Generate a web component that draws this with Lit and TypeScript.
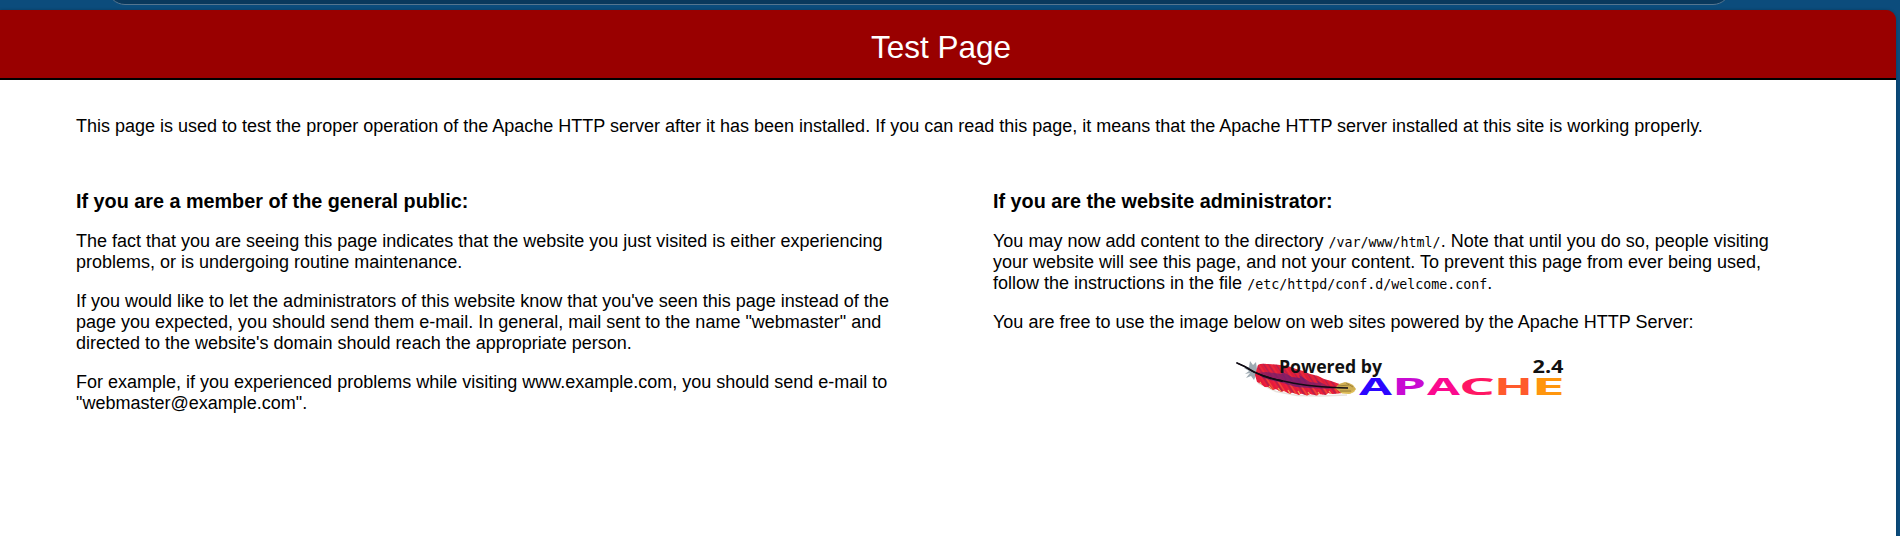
import { LitElement, html, css, svg } from "lit";
import { customElement } from "lit/decorators.js";

@customElement("apache-logo")
export class ApacheLogo extends LitElement {
  static styles = css`
    :host { display: block; }
    .logo { display: block; width: 336px; height: 54px; overflow: visible; }
    .small { font: bold 18px "Open Sans", sans-serif; fill: #111; }
    .big { font: bold 23px "Open Sans", sans-serif; }
  `;

  render() {
    // letter, left edge, horizontal stretch, colour
    const letters: [string, number, number, string][] = [
      ["A", 129, 2.08, "#2b06ff"],
      ["P", 162, 2.37, "#c80bd2"],
      ["A", 197, 2.08, "#fb0a8e"],
      ["C", 229, 2.46, "#ff1764"],
      ["H", 264, 2.22, "#ff5a2c"],
      ["E", 301.5, 2.6, "#ff960d"],
    ];
    const barbs = Array.from({ length: 30 }, (_, i) => 26 + i * 2.9);
    const shaft = (x: number) => 22 + 15 * Math.sin(((x - 24) / 92) * 1.5);
    const upper = ["#f0263c", "#8f2360", "#f0383c", "#d91c3c", "#8d2262"];
    const lower = ["#e81c3e", "#f42140", "#a82450", "#f85a35"];
    return html`
      <svg class="logo" viewBox="0 0 336 54" role="img" aria-label="Powered by Apache 2.4">
        <defs>
          <clipPath id="vane">
            <path d="M28 14Q31 12 37 13L46 13.5L58 15L66 18L73 20L80 23L88 25L94 28L101 30L112 34L112 42L103 43L98 42L96 44L89 43L87 44.5L80 43L77 44.5L71 42.5L69 44L62 41.5L60 43L54 40L51 41L46 38L43 39L38 36L35 36L31 33L27 31L25 24Z"></path>
          </clipPath>
          <linearGradient id="fade" x1="0" y1="0" x2="1" y2="0">
            <stop offset="0" stop-color="#7a2067"></stop>
            <stop offset=".5" stop-color="#5a1c7a"></stop>
            <stop offset="1" stop-color="#8c2060"></stop>
          </linearGradient>
        </defs>
        <path d="M28 32L46 40.5L67 44.5L91 45L117 44" fill="none" stroke="#d8d0c8" stroke-width="1.6" opacity=".6"></path>
        <path d="M14 17L19 16L20 10L23 14L26 11L27 18L26 24L24 29L21 25L16 27L20 22L15 23L19 20Z" fill="#8d9ba4" opacity=".85"></path>
        <g clip-path="url(#vane)">
          <path d="M24 10H114V46H24Z" fill="#e3203d"></path>
          ${barbs.map((x, i) => svg`<path d="M${x + 4} ${shaft(x)}L${x - 6} ${shaft(x) - 15}" stroke="${upper[i % 5]}" stroke-width="1.3" opacity=".5"></path><path d="M${x} ${shaft(x)}L${x + 9} ${shaft(x) + 14}" stroke="${lower[i % 4]}" stroke-width="1.5" opacity=".7"></path>`)}
          <path d="M27 22L36 21L44 22L52 23L51 20L62 26L70 27L69 24L80 31L88 32L86 29L98 35L108 37L98 38L80 37L66 36L53 32L40 29L33 27Z" fill="url(#fade)" opacity=".7"></path>
          <path d="M30 31L32 35M39 35L42 39M48 37L52 42M58 39L61 44M68 40L71 45M78 41L81 45M88 41L91 45M99 40L102 44" stroke="#efb65c" stroke-width="1.2"></path>
        </g>
        <path d="M105 37L109 33L115 31L119 32L123 34L126 38L124 41L119 43L111 42Z" fill="#cfae51"></path>
        <path d="M108 35L119 34M110 40L121 40M116 32L123 36" stroke="#8e7535" stroke-width=".8" fill="none"></path>
        <path d="M112 42L121 42L125 39" stroke="#e8c85f" stroke-width="1" fill="none"></path>
        <path d="M7 12Q15 15 22 20Q36 27 58 31Q80 36 118 37" fill="none" stroke="#100b14" stroke-width="1.3"></path>
        <path d="M7 12Q15 15 24 21Q36 27 52 30" fill="none" stroke="#100b14" stroke-width="1.8" stroke-linecap="round"></path>
        <text class="small" x="49" y="21.5" textLength="103" lengthAdjust="spacingAndGlyphs">Powered by</text>
        <text class="small" x="302.5" y="21.5" textLength="31" lengthAdjust="spacingAndGlyphs">2.4</text>
        ${letters.map(([c, x, s, color]) => svg`<text class="big" transform="translate(${x} 44) scale(${s} 1)" fill="${color}">${c}</text>`)}
      </svg>
    `;
  }
}

@customElement("app-root")
export class AppRoot extends LitElement {
  static styles = css`
    :host {
      display: flex; flex-direction: column; box-sizing: border-box;
      height: 536px; overflow: hidden; background: #0c4c7c; color: #000;
      font: 18px/21px "Liberation Sans", Arial, sans-serif;
    }
    .chrome { height: 10px; flex: none; overflow: hidden; display: flex; align-items: flex-end; padding: 0 169px 5px 107px; box-sizing: border-box; }
    .address { flex: 1; height: 36px; box-sizing: border-box; border: 1px solid #55758f; border-radius: 18px; background: #0a395d; }
    .page { flex: 1; margin-right: 4px; background: linear-gradient(#900 40px, #fff 40px); border-top-right-radius: 10px; box-shadow: 0 0 3px rgba(0, 0, 0, .25); }
    .title { margin: 0; height: 70px; box-sizing: border-box; background: linear-gradient(#900 68px, #000 68px); border-top-right-radius: 10px; color: #fff; font-size: 31.5px; font-weight: 400; line-height: 74px; padding-right: 14px; text-align: center; }
    .content { padding: 36px 76px 0; }
    p { margin: 0 0 18px; white-space: nowrap; }
    .intro { margin-bottom: 53px; }
    .columns { display: grid; grid-template-columns: 917px 778px; }
    h2 { margin: 0 0 19px; font-size: 19.8px; line-height: 22px; white-space: nowrap; }
    code { font: 13.3px/1 "DejaVu Sans Mono", monospace; }
    .badge { display: flex; justify-content: center; padding-left: 32px; }
  `;

  render() {
    return html`
      <div class="chrome"><div class="address"></div></div>
      <main class="page">
        <h1 class="title">Test Page</h1>
        <div class="content">
          <p class="intro">This page is used to test the proper operation of the Apache HTTP server after it has been installed. If you can read this page, it means that the Apache HTTP server installed at this site is working properly.</p>
          <div class="columns">
            <section>
              <h2>If you are a member of the general public:</h2>
              <p>The fact that you are seeing this page indicates that the website you just visited is either experiencing<br>problems, or is undergoing routine maintenance.</p>
              <p>If you would like to let the administrators of this website know that you've seen this page instead of the<br>page you expected, you should send them e-mail. In general, mail sent to the name "webmaster" and<br>directed to the website's domain should reach the appropriate person.</p>
              <p>For example, if you experienced problems while visiting www.example.com, you should send e-mail to<br>"webmaster@example.com".</p>
            </section>
            <section>
              <h2>If you are the website administrator:</h2>
              <p>You may now add content to the directory <code>/var/www/html/</code>. Note that until you do so, people visiting<br>your website will see this page, and not your content. To prevent this page from ever being used,<br>follow the instructions in the file <code>/etc/httpd/conf.d/welcome.conf</code>.</p>
              <p>You are free to use the image below on web sites powered by the Apache HTTP Server:</p>
              <div class="badge"><apache-logo></apache-logo></div>
            </section>
          </div>
        </div>
      </main>
    `;
  }
}
